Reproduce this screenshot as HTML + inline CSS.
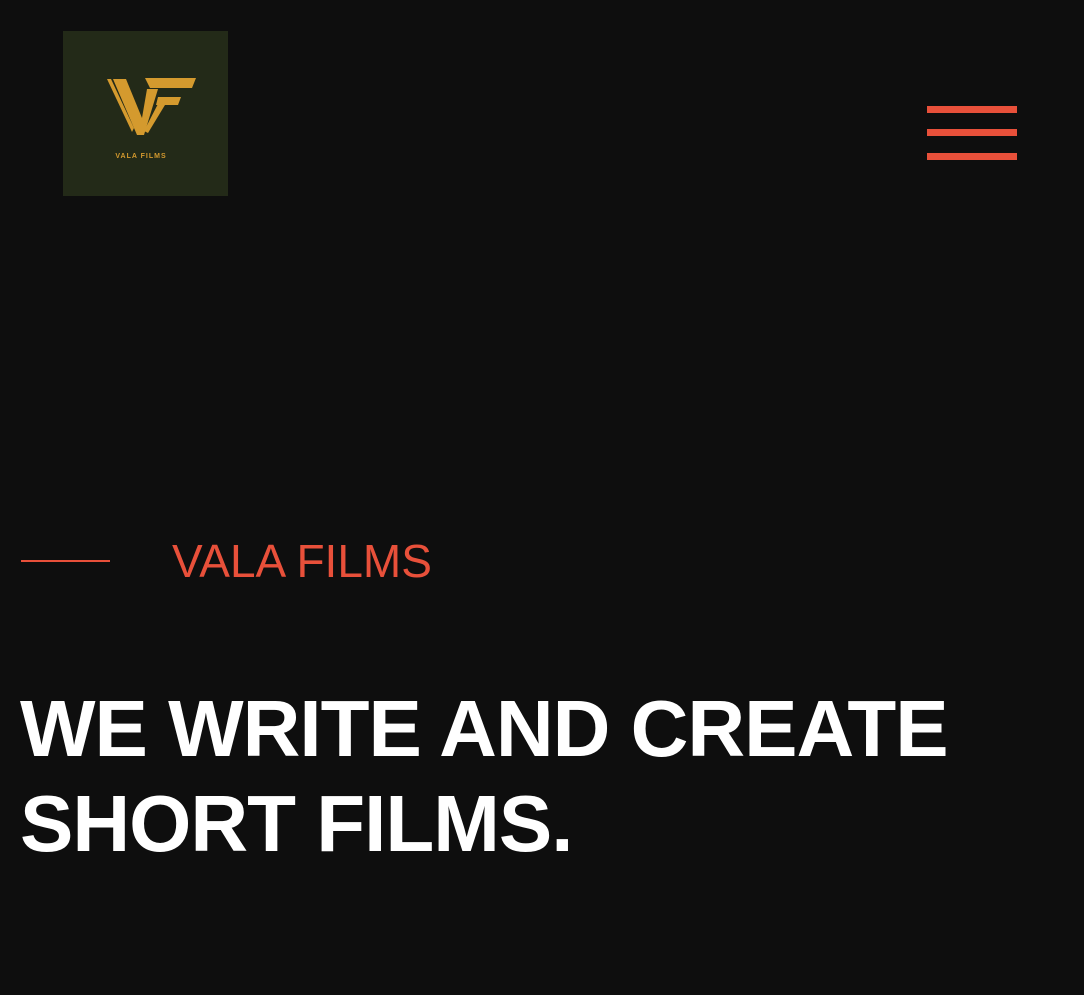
<!DOCTYPE html>
<html><head><style>
html,body{margin:0;padding:0;background:#0e0e0e;width:1084px;height:995px;overflow:hidden;font-family:"Liberation Sans",sans-serif}
.logo{position:absolute;left:63px;top:31px;width:165px;height:165px;background:#232a18}
.bar{position:absolute;left:927px;width:90px;height:7px;background:#e8503a}
.line{position:absolute;left:21px;top:560px;width:89px;height:2px;background:#e8503a}
.tag{position:absolute;left:172px;top:534px;color:#e8503a;font-size:46px;font-weight:300;line-height:54px}
h1{position:absolute;left:20px;top:681px;margin:0;color:#fff;font-size:80px;line-height:95px;font-weight:bold;letter-spacing:-1px}
</style></head><body>
<div class="logo">
<svg width="165" height="165" viewBox="63 31 165 165">
<g fill="#d49a2e">
<polygon points="107,79 111,79 134,128 132,132"/>
<polygon points="113,79 126,79 142,118 147,89 158,89 144,135 137,135"/>
<polygon points="145,78 196,78 192,88 150,88"/>
<polygon points="158,97 181,97 178,105 156,105"/>
<polygon points="160,100 168,100 148,133 144,131"/>
</g>
<text x="141" y="158" fill="#d49a2e" font-size="7" font-weight="bold" text-anchor="middle" letter-spacing="1" font-family="Liberation Sans,sans-serif">VALA FILMS</text>
</svg>
</div>
<div class="bar" style="top:106px"></div>
<div class="bar" style="top:129px"></div>
<div class="bar" style="top:153px"></div>
<div class="line"></div>
<div class="tag">VALA FILMS</div>
<h1>WE WRITE AND CREATE<br>SHORT FILMS.</h1>
</body></html>
